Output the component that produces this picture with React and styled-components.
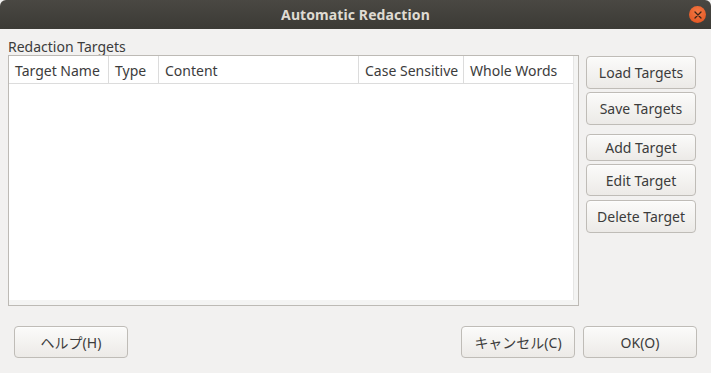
import React from 'react'
import styled, { createGlobalStyle } from 'styled-components'

const GlobalStyle = createGlobalStyle`
  html, body {
    margin: 0;
    padding: 0;
    background: #f2f1f0;
  }
  body {
    font-family: "Noto Sans", "Noto Sans CJK JP", sans-serif;
    font-size: 14px;
    color: #3c3c3c;
  }
`

const columns = [
  { name: 'Target Name', width: 100 },
  { name: 'Type', width: 50 },
  { name: 'Content', width: 200 },
  { name: 'Case Sensitive', width: 105 },
  { name: 'Whole Words', width: 0 },
]

function App() {
  return (
    <>
      <GlobalStyle />
      <Window>
        <TitleBar>
          <Title>Automatic Redaction</Title>
          <CloseButton aria-label="close">
            <svg width="8" height="8" viewBox="0 0 8 8">
              <path d="M1 1 L7 7 M7 1 L1 7" stroke="#3a2418" strokeWidth="1.3" strokeLinecap="round" />
            </svg>
          </CloseButton>
        </TitleBar>

        <Body>
          <LeftCol>
            <Label>Redaction Targets</Label>
            <TableBox>
              <TableMain>
                <HeaderRow>
                  {columns.map((c) => (
                    <HeaderCell key={c.name} $width={c.width}>{c.name}</HeaderCell>
                  ))}
                </HeaderRow>
                <Rows />
              </TableMain>
              <VStrip />
              <HStrip />
            </TableBox>
          </LeftCol>

          <ButtonCol>
            <SideButton $h={33}>Load Targets</SideButton>
            <SideButton $h={33} $mt={3}>Save Targets</SideButton>
            <SideButton $h={27} $mt={9}>Add Target</SideButton>
            <SideButton $h={32} $mt={3}>Edit Target</SideButton>
            <SideButton $h={33} $mt={4}>Delete Target</SideButton>
          </ButtonCol>
        </Body>

        <Footer>
          <DialogButton>ヘルプ(H)</DialogButton>
          <FooterRight>
            <DialogButton>キャンセル(C)</DialogButton>
            <DialogButton>OK(O)</DialogButton>
          </FooterRight>
        </Footer>
      </Window>
    </>
  )
}

export default App

const Window = styled.div`
  width: 711px;
  height: 373px;
  display: flex;
  flex-direction: column;
  background: #f2f1f0;
  overflow: hidden;
`

const TitleBar = styled.div`
  height: 29px;
  flex: none;
  position: relative;
  display: flex;
  align-items: center;
  justify-content: center;
  background: linear-gradient(#4a4843, #3b3a35);
  border-radius: 6px 6px 0 0;
`

const Title = styled.div`
  font-family: "Noto Sans", sans-serif;
  font-weight: bold;
  font-size: 14px;
  color: #dfdbd2;
  letter-spacing: 0.1px;
`

const CloseButton = styled.div`
  position: absolute;
  right: 5px;
  top: 6px;
  width: 17px;
  height: 17px;
  border-radius: 50%;
  background: radial-gradient(circle at 50% 35%, #f47a45, #df4f1c);
  display: flex;
  align-items: center;
  justify-content: center;
`

const Body = styled.div`
  display: flex;
  gap: 7px;
  padding: 8px 15px 0 8px;
`

const LeftCol = styled.div`
  flex: 1;
  display: flex;
  flex-direction: column;
`

const Label = styled.div`
  height: 18px;
  line-height: 19px;
  font-size: 14px;
`

const TableBox = styled.div`
  height: 251px;
  box-sizing: border-box;
  border: 1px solid #bdbab5;
  display: grid;
  grid-template-columns: 1fr 5px;
  grid-template-rows: 1fr 5px;
  background: #f4f4f3;
`

const TableMain = styled.div`
  background: #fff;
  display: flex;
  flex-direction: column;
`

const HeaderRow = styled.div`
  height: 27px;
  display: flex;
  border-bottom: 1px solid #dcdcdc;
`

const HeaderCell = styled.div`
  ${(p) => (p.$width ? `width: ${p.$width}px;` : 'flex: 1;')}
  box-sizing: border-box;
  padding-left: 6px;
  padding-top: 1px;
  line-height: 27px;
  white-space: nowrap;
  overflow: hidden;
  border-right: 1px solid ${(p) => (p.$width ? '#dcdcdc' : 'transparent')};
`

const Rows = styled.div`
  flex: 1;
`

const VStrip = styled.div`
  background: #f4f4f3;
  border-left: 1px solid #e6e6e5;
`

const HStrip = styled.div`
  grid-column: 1 / span 2;
  background: #f4f4f3;
`

const ButtonCol = styled.div`
  width: 110px;
  display: flex;
  flex-direction: column;
  padding-top: 19px;
`

const buttonBase = `
  box-sizing: border-box;
  border: 1px solid #bfbcb7;
  border-radius: 4px;
  background: linear-gradient(#fbfbfa, #eceae7);
  color: #3c3c3c;
  display: flex;
  align-items: center;
  justify-content: center;
  white-space: nowrap;
  box-shadow: 0 1px 0 rgba(255, 255, 255, 0.6) inset;
`

const SideButton = styled.div`
  ${buttonBase}
  height: ${(p) => p.$h}px;
  margin-top: ${(p) => p.$mt || 0}px;
`

const Footer = styled.div`
  display: flex;
  justify-content: space-between;
  padding: 20px 14px 0 14px;
`

const FooterRight = styled.div`
  display: flex;
  gap: 8px;
`

const DialogButton = styled.div`
  ${buttonBase}
  width: 114px;
  height: 32px;
  font-family: "Noto Sans", "Noto Sans CJK JP", sans-serif;
`
